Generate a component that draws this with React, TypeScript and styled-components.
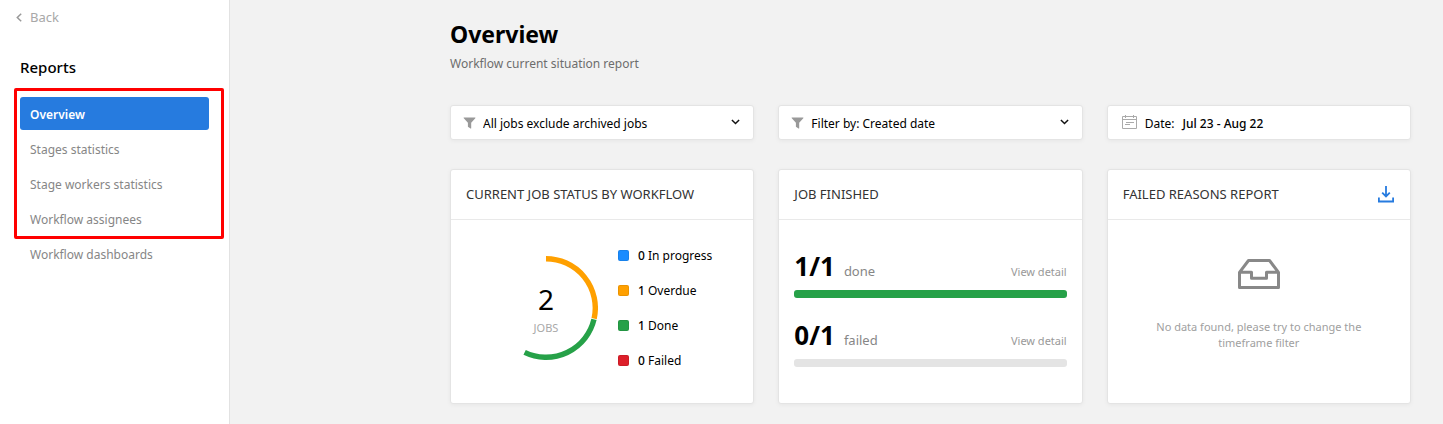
import React from "react";
import styled, { createGlobalStyle } from "styled-components";

const GlobalStyle = createGlobalStyle`
  * { box-sizing: border-box; }
  body {
    margin: 0;
    background: #f2f2f2;
    color: #000;
    font-family: "Segoe UI", "Noto Sans", sans-serif;
    font-size: 12px;
    line-height: 16px;
  }
  h1, h2, p, ul { margin: 0; padding: 0; }
  ul { list-style: none; }
  button, select { font: inherit; color: inherit; }
`;

const Page = styled.div`
  display: flex;
  min-height: 100vh;
`;

const Sidebar = styled.aside`
  flex: 0 0 230px;
  padding: 8px 20px;
  background: #fff;
  border-right: 1px solid #e2e2e2;
`;

const BackLink = styled.a`
  display: flex;
  align-items: center;
  gap: 8px;
  margin-left: -4px;
  color: #a8a8a8;
  font-size: 13px;
  line-height: 18px;
  text-decoration: none;
`;

const SidebarTitle = styled.h2`
  margin: 29px 0 18px;
  font-size: 15px;
  font-weight: 500;
  line-height: 24px;
`;

const NavGroup = styled.ul`
  position: relative;
  display: grid;
  gap: 2px;
  margin-bottom: 2px;
`;

const Highlight = styled.li`
  position: absolute;
  top: -9px;
  right: -15px;
  bottom: -4px;
  left: -6px;
  border: 3px solid #f00;
  border-radius: 2px;
  pointer-events: none;
`;

const NavLink = styled.a<{ $active?: boolean }>`
  display: block;
  padding: 2px 10px 0;
  border-radius: 3px;
  background: ${(p) => (p.$active ? "#267bdf" : "transparent")};
  color: ${(p) => (p.$active ? "#fff" : "#868686")};
  font-weight: ${(p) => (p.$active ? 600 : 400)};
  line-height: 31px;
  text-decoration: none;
`;

const Main = styled.main`
  flex: 1;
  min-width: 0;
  padding: 18px 32px 20px 220px;
`;

const PageTitle = styled.h1`
  font-size: 23px;
  font-weight: 700;
  line-height: 32px;
`;

const Subtitle = styled.p`
  margin: 6px 0 33px;
  color: #6d6d6d;
`;

const Columns = styled.div`
  display: grid;
  grid-template-columns: repeat(3, minmax(0, 1fr));
  gap: 29px 24px;
`;

const panel = `
  background: #fff;
  border: 1px solid #e4e4e4;
  border-radius: 3px;
  box-shadow: 0 1px 4px rgba(0, 0, 0, 0.05);
`;

const FilterBox = styled.label`
  ${panel}
  display: flex;
  align-items: center;
  gap: 7px;
  height: 35px;
  padding: 0 13px 0 12px;
`;

const FilterSelect = styled.select`
  flex: 1;
  min-width: 0;
  padding: 2px 0 0;
  border: 0;
  outline: 0;
  appearance: none;
  background: transparent;
  line-height: 20px;
`;

const DateButton = styled.button`
  ${panel}
  display: flex;
  align-items: center;
  gap: 8px;
  height: 35px;
  padding: 0 14px;
  text-align: left;
`;

const DateText = styled.span<{ $strong?: boolean }>`
  padding-top: 2px;
  font-weight: ${(p) => (p.$strong ? 500 : 400)};
`;

const Card = styled.section`
  ${panel}
  display: flex;
  flex-direction: column;
  min-height: 235px;
`;

const CardHeader = styled.header`
  display: flex;
  align-items: center;
  justify-content: space-between;
  height: 50px;
  padding: 0 16px 0 15px;
  border-bottom: 1px solid #e9e9e9;
`;

const CardTitle = styled.h2`
  padding-bottom: 2px;
  color: #333;
  font-size: 13px;
  font-weight: 400;
  line-height: 16px;
`;

const IconButton = styled.button`
  display: flex;
  padding: 0;
  border: 0;
  background: transparent;
  color: #267bdf;
`;

const StatusBody = styled.div`
  display: flex;
  flex: 1;
  align-items: center;
  justify-content: flex-end;
  gap: 20px;
  padding: 0 41px 8px 0;
`;

const Donut = styled.div`
  display: grid;
  place-items: center;
  width: 104px;
  height: 104px;
  > * { grid-area: 1 / 1; }
`;

const DonutLabel = styled.div`
  padding-top: 4px;
  text-align: center;
`;

const DonutTotal = styled.div`
  font-size: 28px;
  line-height: 32px;
`;

const DonutCaption = styled.div`
  margin-top: 5px;
  color: #a8a8a8;
  font-size: 11px;
  line-height: 16px;
`;

const LegendItem = styled.li`
  display: flex;
  align-items: center;
  gap: 9px;
  line-height: 35px;
  white-space: nowrap;
`;

const Swatch = styled.span<{ $color: string }>`
  width: 11px;
  height: 11px;
  border: 1px solid rgba(0, 0, 0, 0.08);
  border-radius: 2px;
  background: ${(p) => p.$color};
`;

const Count = styled.span`
  font-weight: 500;
`;

const FinishedBody = styled.div`
  display: grid;
  gap: 21px;
  padding: 30px 15px;
`;

const ProgressHead = styled.div`
  display: flex;
  align-items: baseline;
  gap: 9px;
  margin-bottom: 8px;
`;

const Ratio = styled.strong`
  font-size: 26px;
  font-weight: 700;
  line-height: 32px;
`;

const Outcome = styled.span`
  flex: 1;
  color: #868686;
  font-size: 13px;
`;

const DetailLink = styled.a`
  color: #999;
  font-size: 11px;
  text-decoration: none;
`;

const Track = styled.div`
  height: 8px;
  overflow: hidden;
  border-radius: 3px;
  background: #e4e4e4;
`;

const Fill = styled.div`
  height: 100%;
  background: #26a148;
`;

const EmptyBody = styled.div`
  display: flex;
  flex-direction: column;
  align-items: center;
  gap: 30px;
  padding: 39px 40px 0;
  color: #a0a0a0;
  font-size: 11px;
  text-align: center;
`;

const EmptyText = styled.p`
  max-width: 224px;
`;

const FunnelIcon = () => (
  <svg width="13" height="12" viewBox="0 0 13 12" fill="#999" aria-hidden="true">
    <path d="M1 .5h11c.4 0 .6.5.3.8L8.200 5.800v5.500c0 .3-.3.5-.6.300L5.200 10c-.2-.1-.3-.2-.3-.4V5.800L.8 1.300C.5 1 .6.5 1 .5Z" />
  </svg>
);

const ChevronIcon = () => (
  <svg width="9" height="9" viewBox="0 0 9 9" fill="none" stroke="#111" strokeWidth="1.5" aria-hidden="true">
    <path d="m.9 2 3.600 3.500L8.100 2" />
  </svg>
);

const BackIcon = () => (
  <svg width="6" height="9" viewBox="0 0 6 9" fill="none" stroke="#999" strokeWidth="1.5" aria-hidden="true">
    <path d="M5.200.7 1.300 4.500l3.900 3.800" />
  </svg>
);

const CalendarIcon = () => (
  <svg width="15" height="18" viewBox="0 0 15 18" fill="none" stroke="#aaa" aria-hidden="true">
    <path d="M.5 2.500h14v12H.5zM.5 5.500h14M3.500 1v3M11.500 1v3M4 8.500h8M3 10.500h5" />
  </svg>
);

const DownloadIcon = () => (
  <svg width="16" height="17" viewBox="0 0 16 17" fill="none" stroke="currentColor" strokeWidth="1.800" aria-hidden="true">
    <path d="M8 0v10.500M4.200 6.700 8 10.500l3.800-3.800M.9 11.500v4h14.200v-4" />
  </svg>
);

const InboxIcon = () => (
  <svg width="42" height="30" viewBox="0 0 42 30" fill="none" stroke="#888" strokeWidth="3" strokeLinejoin="round" aria-hidden="true">
    <path d="M1.500 13.300 10.500 1.500h21l9 11.800v15.200h-39ZM1.500 13.300h12v6h15v-6h12" />
  </svg>
);

const arc = (from: number, to: number) => {
  const point = (deg: number) => {
    const a = (deg * Math.PI) / 180;
    return `${(52 + 49.3 * Math.sin(a)).toFixed(2)} ${(52 - 49.3 * Math.cos(a)).toFixed(2)}`;
  };
  return `M${point(from)}A49.3 49.3 0 0 1 ${point(to)}`;
};

const statuses = [
  { count: 0, label: "In progress", color: "#1a8cff" },
  { count: 1, label: "Overdue", color: "#ffa000" },
  { count: 1, label: "Done", color: "#26a148" },
  { count: 0, label: "Failed", color: "#dd1f2a" },
];

const outcomes = [
  { ratio: "1/1", label: "done", percent: 100 },
  { ratio: "0/1", label: "failed", percent: 0 },
];

const reports = ["Overview", "Stages statistics", "Stage workers statistics", "Workflow assignees"];

const Filter = ({ value }: { value: string }) => (
  <FilterBox>
    <FunnelIcon />
    <FilterSelect aria-label={value}>
      <option>{value}</option>
    </FilterSelect>
    <ChevronIcon />
  </FilterBox>
);

export default function App() {
  return (
    <>
      <GlobalStyle />
      <Page>
        <Sidebar>
          <BackLink href="#">
            <BackIcon />
            Back
          </BackLink>
          <SidebarTitle>Reports</SidebarTitle>
          <nav>
            <NavGroup>
              {reports.map((name, i) => (
                <li key={name}>
                  <NavLink href="#" $active={i === 0}>{name}</NavLink>
                </li>
              ))}
              <Highlight aria-hidden="true" />
            </NavGroup>
            <NavLink href="#">Workflow dashboards</NavLink>
          </nav>
        </Sidebar>
        <Main>
          <PageTitle>Overview</PageTitle>
          <Subtitle>Workflow current situation report</Subtitle>
          <Columns>
            <Filter value="All jobs exclude archived jobs" />
            <Filter value="Filter by: Created date" />
            <DateButton type="button">
              <CalendarIcon />
              <DateText>Date:</DateText>
              <DateText $strong>Jul 23 - Aug 22</DateText>
            </DateButton>

            <Card>
              <CardHeader>
                <CardTitle>CURRENT JOB STATUS BY WORKFLOW</CardTitle>
              </CardHeader>
              <StatusBody>
                <Donut>
                  <svg width="104" height="104" viewBox="0 0 104 104" fill="none" strokeWidth="5.4" aria-hidden="true">
                    <path d={arc(0, 102.4)} stroke="#ffa000" />
                    <path d={arc(103.4, 205.7)} stroke="#26a148" />
                  </svg>
                  <DonutLabel>
                    <DonutTotal>2</DonutTotal>
                    <DonutCaption>JOBS</DonutCaption>
                  </DonutLabel>
                </Donut>
                <ul>
                  {statuses.map((s) => (
                    <LegendItem key={s.label}>
                      <Swatch $color={s.color} />
                      <span><Count>{s.count}</Count> {s.label}</span>
                    </LegendItem>
                  ))}
                </ul>
              </StatusBody>
            </Card>

            <Card>
              <CardHeader>
                <CardTitle>JOB FINISHED</CardTitle>
              </CardHeader>
              <FinishedBody>
                {outcomes.map((o) => (
                  <div key={o.label}>
                    <ProgressHead>
                      <Ratio>{o.ratio}</Ratio>
                      <Outcome>{o.label}</Outcome>
                      <DetailLink href="#">View detail</DetailLink>
                    </ProgressHead>
                    <Track>
                      <Fill style={{ width: `${o.percent}%` }} />
                    </Track>
                  </div>
                ))}
              </FinishedBody>
            </Card>

            <Card>
              <CardHeader>
                <CardTitle>FAILED REASONS REPORT</CardTitle>
                <IconButton type="button" aria-label="Download">
                  <DownloadIcon />
                </IconButton>
              </CardHeader>
              <EmptyBody>
                <InboxIcon />
                <EmptyText>No data found, please try to change the timeframe filter</EmptyText>
              </EmptyBody>
            </Card>
          </Columns>
        </Main>
      </Page>
    </>
  );
}
